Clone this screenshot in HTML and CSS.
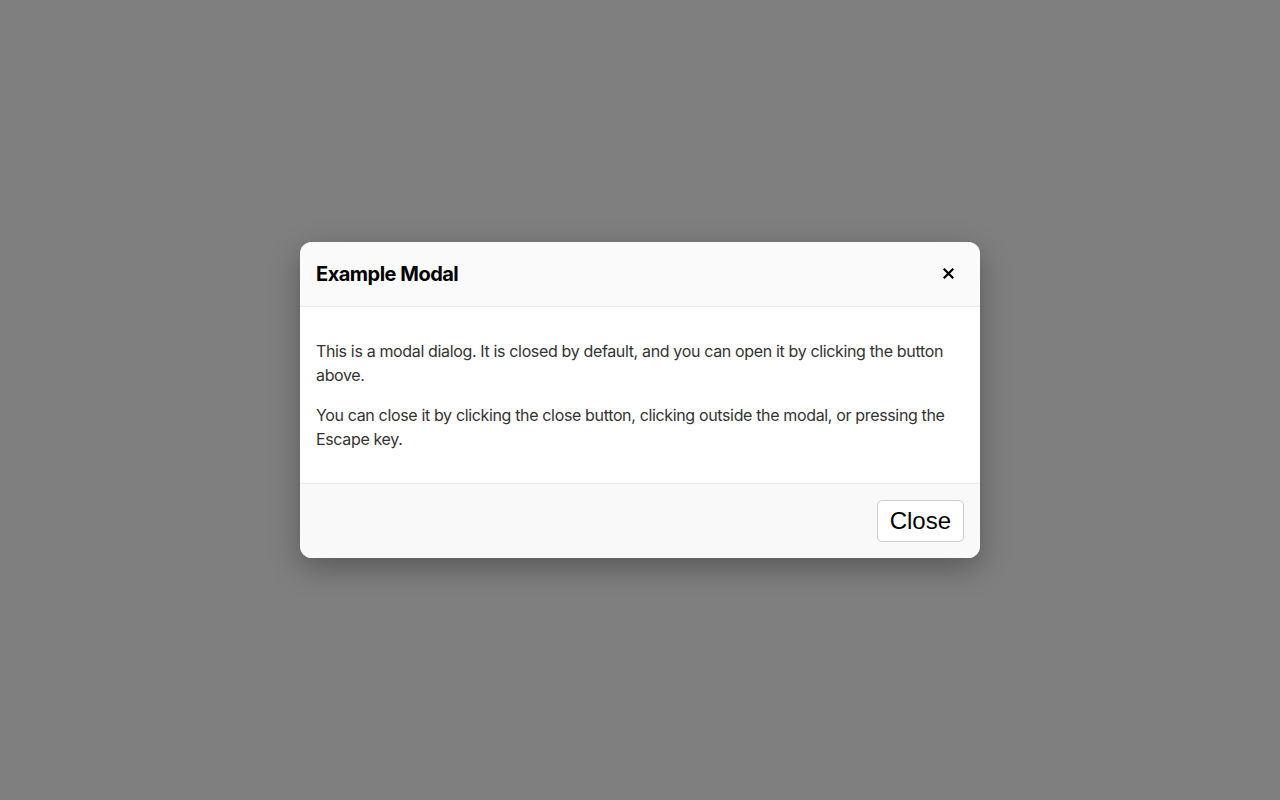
FILE: index.html
```html
<!DOCTYPE html>
<html lang="en">
<head>
    <meta charset="UTF-8">
    <meta name="viewport" content="width=device-width, initial-scale=1.0">
    <title>Example Modal</title>
    <link rel="stylesheet" href="styles.css">
</head>
<body>
    <div class="backdrop">
        <div class="modal" role="dialog" aria-labelledby="modal-title">
            <div class="modal-header">
                <h2 id="modal-title">Example Modal</h2>
                <button class="close-x" aria-label="Close">
                    <svg width="11" height="11" viewBox="0 0 11 11">
                        <path d="M1.5 1.5 L9.5 9.5 M9.5 1.5 L1.5 9.5" stroke="#000" stroke-width="2.2" stroke-linecap="square"/>
                    </svg>
                </button>
            </div>
            <div class="modal-body">
                <p>This is a modal dialog. It is closed by default, and you can open it by clicking the button above.</p>
                <p>You can close it by clicking the close button, clicking outside the modal, or pressing the Escape key.</p>
            </div>
            <div class="modal-footer">
                <button class="close-btn">Close</button>
            </div>
        </div>
    </div>
</body>
</html>
```

FILE: styles.css
```css
body {
    margin: 0;
    font-family: Inter, 'Noto Sans', sans-serif;
    background: #fff;
}
.backdrop {
    height: 100vh;
    background: #7f7f7f;
    display: flex;
    justify-content: center;
    align-items: center;
}
.modal {
    width: 680px;
    background: #fff;
    border-radius: 12px;
    overflow: hidden;
    box-shadow: 0 10px 30px rgba(0, 0, 0, 0.3);
}
.modal-header {
    display: flex;
    justify-content: space-between;
    align-items: center;
    padding: 16px;
    height: 32px;
    background: #fafafa;
    border-bottom: 1px solid #eaeaea;
}
.modal-header h2 {
    margin: 0;
    font-size: 20px;
    font-weight: 700;
    color: #000;
    letter-spacing: -0.5px;
}
.close-x {
    border: none;
    background: none;
    padding: 4px;
    margin-right: 6px;
    margin-top: -2px;
    display: flex;
    cursor: pointer;
}
.modal-body {
    padding: 16px;
    color: #333;
    font-size: 16px;
    line-height: 24px;
    letter-spacing: -0.35px;
}
.modal-body p {
    margin: 16px 0;
}
.modal-footer {
    display: flex;
    justify-content: flex-end;
    padding: 16px;
    background: #f9f9f9;
    border-top: 1px solid #eaeaea;
}
.close-btn {
    font-family: 'Liberation Sans', Arial, sans-serif;
    font-size: 24px;
    padding: 5px 12px;
    height: 42px;
    background: #fff;
    border: 1px solid #ccc;
    border-radius: 5px;
    color: #000;
    cursor: pointer;
}
```
